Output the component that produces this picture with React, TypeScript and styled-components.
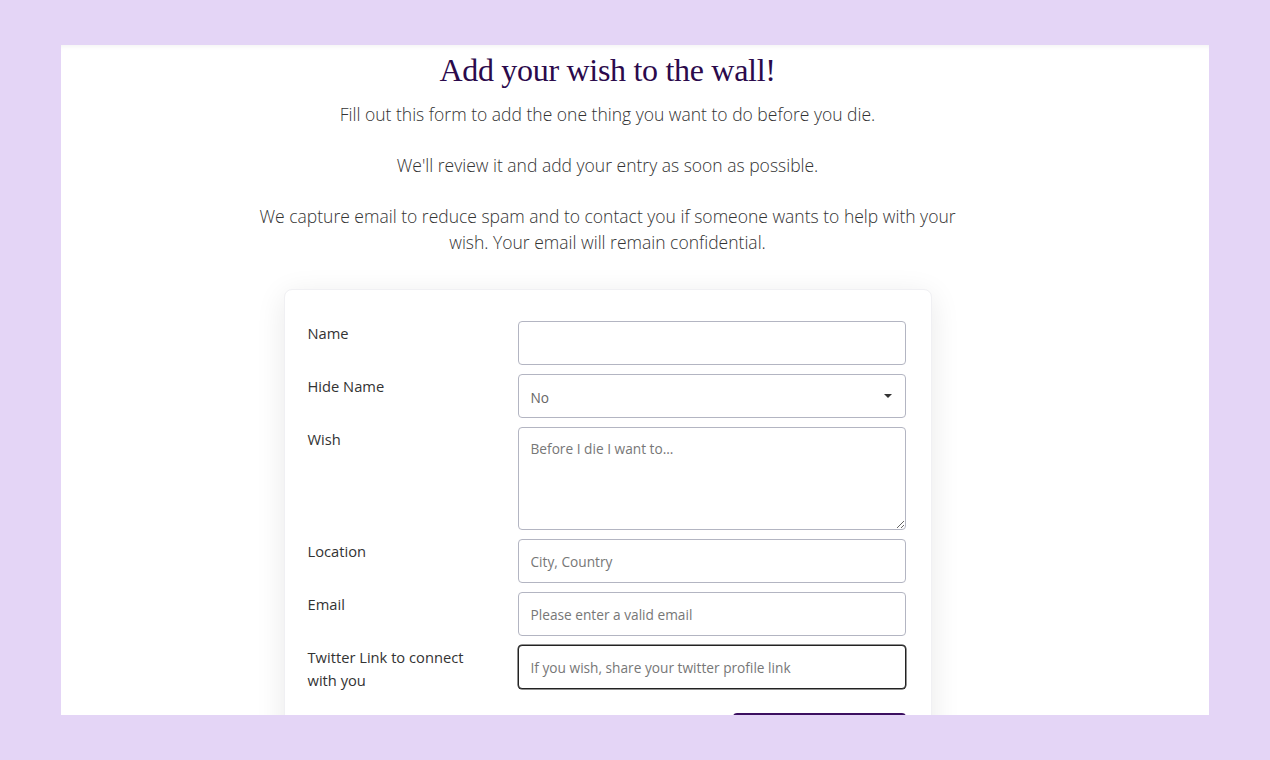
import React from "react";
import styled, { createGlobalStyle } from "styled-components";

const GlobalStyle = createGlobalStyle`
  html, body {
    margin: 0;
    padding: 0;
    background: #e4d5f6;
  }
  body {
    font-family: "Open Sans", "Liberation Sans", sans-serif;
    color: #333;
  }
`;

const Page = styled.div`
  padding: 45px 61px;
  height: 760px;
  box-sizing: border-box;
`;

const Panel = styled.main`
  background: #fff;
  height: 670px;
  overflow: hidden;
  box-shadow: inset 0 5px 6px -5px rgba(0, 0, 0, 0.08);
  display: flex;
  justify-content: center;
  padding-right: 55px;
`;

const Column = styled.section`
  width: 700px;
  display: flex;
  flex-direction: column;
  align-items: center;
`;

const Title = styled.h1`
  font-family: "Liberation Serif", "DejaVu Serif", serif;
  font-weight: 400;
  font-size: 32px;
  color: #2b0a4c;
  margin: 7px 0 13px;
  line-height: 36px;
  letter-spacing: -0.3px;
`;

const Intro = styled.p`
  font-weight: 300;
  font-size: 17.5px;
  line-height: 26px;
  text-align: center;
  margin: 0 0 25px;
  color: #333;
`;

const Card = styled.form`
  width: 648px;
  box-sizing: border-box;
  margin-top: 9px;
  padding: 31px 25px 0 23px;
  background: #fff;
  border: 1px solid #f0f0f3;
  border-radius: 8px;
  box-shadow: 0 6px 30px rgba(0, 0, 0, 0.09);
  display: flex;
  flex-direction: column;
  gap: 9px;
`;

const Row = styled.div`
  display: grid;
  grid-template-columns: 210px 1fr;
  align-items: start;
`;

const Label = styled.label`
  font-size: 14.7px;
  line-height: 23px;
  color: #333;
  padding-top: 1px;
  padding-right: 30px;
`;

const fieldBase = `
  width: 100%;
  box-sizing: border-box;
  font-family: "Open Sans", "Liberation Sans", sans-serif;
  font-size: 13.7px;
  color: #555;
  background: #fff;
  border-radius: 4px;
  padding: 0 12px;
  outline: none;
  &::placeholder {
    color: #777;
  }
`;

const Input = styled.input<{ $focused?: boolean }>`
  ${fieldBase}
  height: 44px;
  border: 1px solid ${(p) => (p.$focused ? "#222" : "#b3b5c2")};
  ${(p) => (p.$focused ? "box-shadow: 0 0 0 0.5px #222;" : "")}
`;

const TextArea = styled.textarea`
  ${fieldBase}
  height: 103px;
  padding-top: 11px;
  border: 1px solid #b3b5c2;
  resize: vertical;
  display: block;
`;

const SelectWrap = styled.div`
  position: relative;

  &::after {
    content: "";
    position: absolute;
    right: 14px;
    top: 20px;
    border-left: 4px solid transparent;
    border-right: 4px solid transparent;
    border-top: 4px solid #333;
    pointer-events: none;
  }
`;

const Select = styled.select`
  ${fieldBase}
  height: 44px;
  padding-top: 2px;
  border: 1px solid #b3b5c2;
  appearance: none;
  color: #666;
`;

const Actions = styled.div`
  display: flex;
  justify-content: flex-end;
  padding-top: 12px;
`;

const Submit = styled.button`
  width: 173px;
  height: 44px;
  border: none;
  border-radius: 4px;
  background: #3c0f60;
  color: #fff;
  font-family: "Open Sans", "Liberation Sans", sans-serif;
  font-size: 14px;
`;

export default function App() {
  return (
    <>
      <GlobalStyle />
      <Page>
        <Panel>
          <Column>
            <Title>Add your wish to the wall!</Title>
            <Intro>Fill out this form to add the one thing you want to do before you die.</Intro>
            <Intro>We'll review it and add your entry as soon as possible.</Intro>
            <Intro>
              We capture email to reduce spam and to contact you if someone wants to help with your
              wish. Your email will remain confidential.
            </Intro>
            <Card onSubmit={(e) => e.preventDefault()}>
              <Row>
                <Label htmlFor="name">Name</Label>
                <Input id="name" type="text" />
              </Row>
              <Row>
                <Label htmlFor="hide">Hide Name</Label>
                <SelectWrap>
                  <Select id="hide" defaultValue="no">
                    <option value="no">No</option>
                    <option value="yes">Yes</option>
                  </Select>
                </SelectWrap>
              </Row>
              <Row>
                <Label htmlFor="wish">Wish</Label>
                <TextArea id="wish" placeholder="Before I die I want to..." />
              </Row>
              <Row>
                <Label htmlFor="location">Location</Label>
                <Input id="location" type="text" placeholder="City, Country" />
              </Row>
              <Row>
                <Label htmlFor="email">Email</Label>
                <Input id="email" type="email" placeholder="Please enter a valid email" />
              </Row>
              <Row>
                <Label htmlFor="twitter">Twitter Link to connect with you</Label>
                <Input
                  id="twitter"
                  type="text"
                  $focused
                  placeholder="If you wish, share your twitter profile link"
                />
              </Row>
              <Actions>
                <Submit type="submit">Submit</Submit>
              </Actions>
            </Card>
          </Column>
        </Panel>
      </Page>
    </>
  );
}
